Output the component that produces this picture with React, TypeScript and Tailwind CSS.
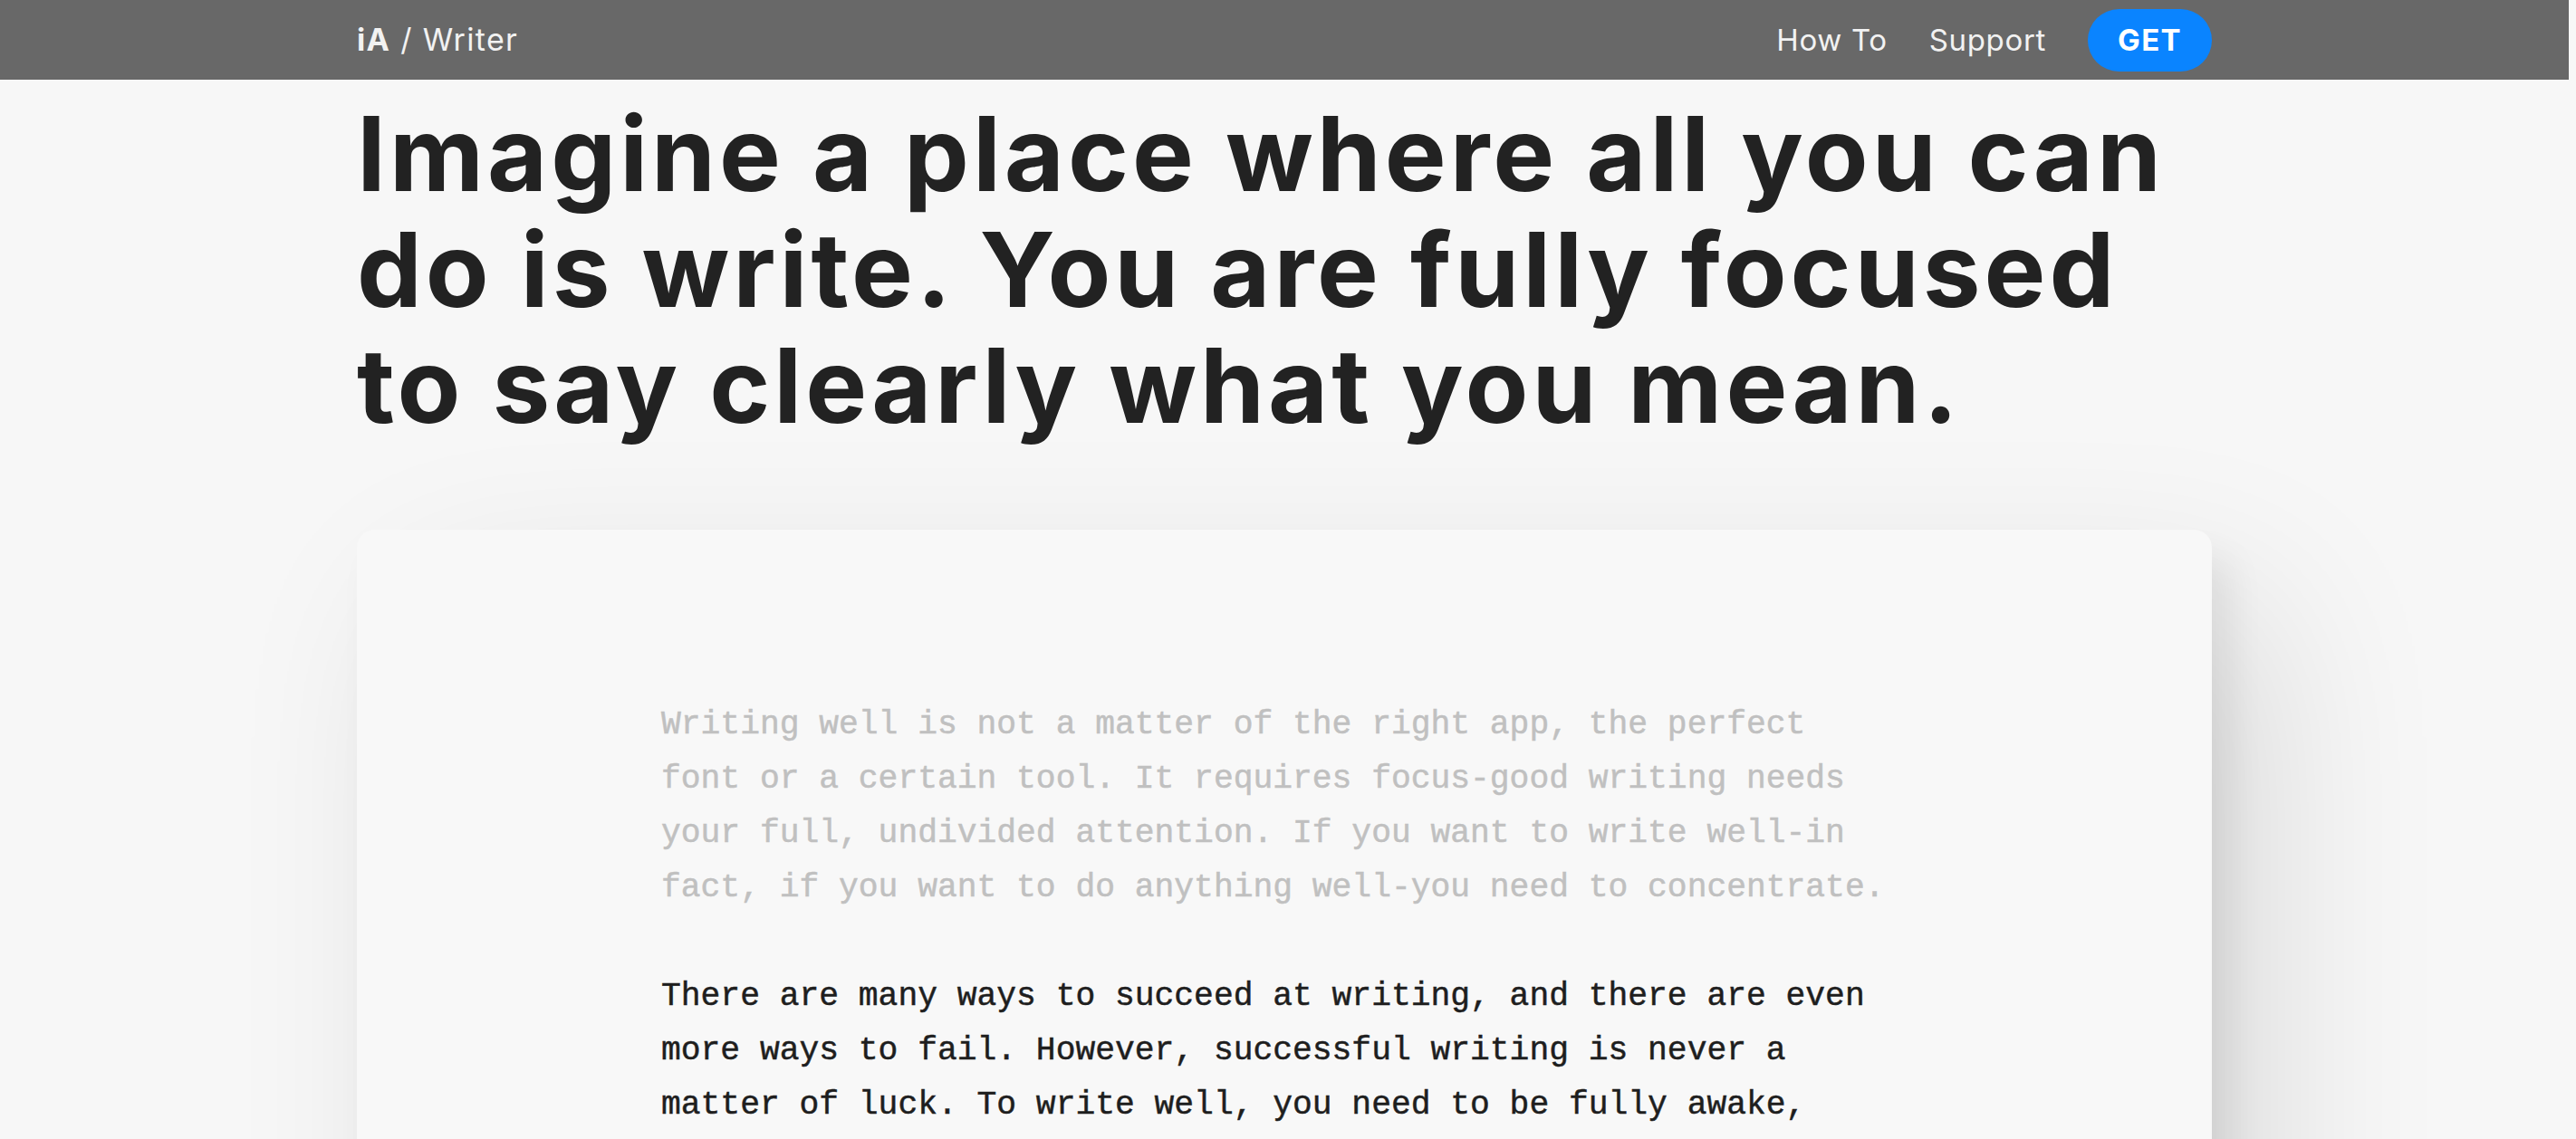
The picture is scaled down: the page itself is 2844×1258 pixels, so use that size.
import React from "react";

const sans = "font-['Inter','Noto_Sans',sans-serif]";
const mono = "font-['Liberation_Mono','DejaVu_Sans_Mono',monospace]";

function Header() {
  return (
    <header className={`w-full h-[88px] bg-[#686868] ${sans}`}>
      <div className="mx-auto w-[2048px] h-full flex items-center justify-between">
        <a className="text-[34px] text-[#f2f2f2] leading-none tracking-[0.04em]">
          <span className="font-bold">iA</span>
          <span className="font-normal"> / Writer</span>
        </a>
        <nav className="flex items-center">
          <a className="text-[33px] text-[#f2f2f2] leading-none tracking-[0.02em]">How To</a>
          <a className="ml-[46px] text-[33px] text-[#f2f2f2] leading-none tracking-[0.02em]">Support</a>
          <button className="ml-[46px] h-[69px] w-[137px] rounded-full bg-[#0a84ff] text-white text-[33px] font-bold leading-none tracking-[0.04em]">
            GET
          </button>
        </nav>
      </div>
    </header>
  );
}

export default function App() {
  return (
    <div className="min-h-screen bg-[#f7f7f7] pr-[8px]">
      <Header />
      <main className="mx-auto w-[2048px]">
        <h1
          className={`mt-[18px] text-[114px] leading-[128px] font-bold text-[#222222] tracking-[0.035em] ${sans}`}
        >
          Imagine a place where all you can do is write. You are fully focused
          to say clearly what you mean.
        </h1>

        <section className="mt-[95px] rounded-[20px] bg-[#f8f8f8] shadow-[20px_30px_40px_rgba(0,0,0,0.07),60px_80px_200px_rgba(0,0,0,0.12)] pt-[186px] pb-[200px] pl-[336px]">
          <div className={`w-[62.5ch] text-[36.3px] leading-[60px] [-webkit-text-stroke:0.5px_currentColor] ${mono}`}>
            <p className="text-[#c0c0c0]">
              Writing well is not a matter of the right app, the perfect font
              or a certain tool. It requires focus-good writing needs your
              full, undivided attention. If you want to write well-in fact, if
              you want to do anything well-you need to concentrate.
            </p>
            <p className="mt-[60px] text-[#1e1e1e]">
              There are many ways to succeed at writing, and there are even
              more ways to fail. However, successful writing is never a matter
              of luck. To write well, you need to be fully awake, focused and
              free of distractions. That is what iA Writer was made for.
            </p>
          </div>
        </section>
      </main>
    </div>
  );
}
